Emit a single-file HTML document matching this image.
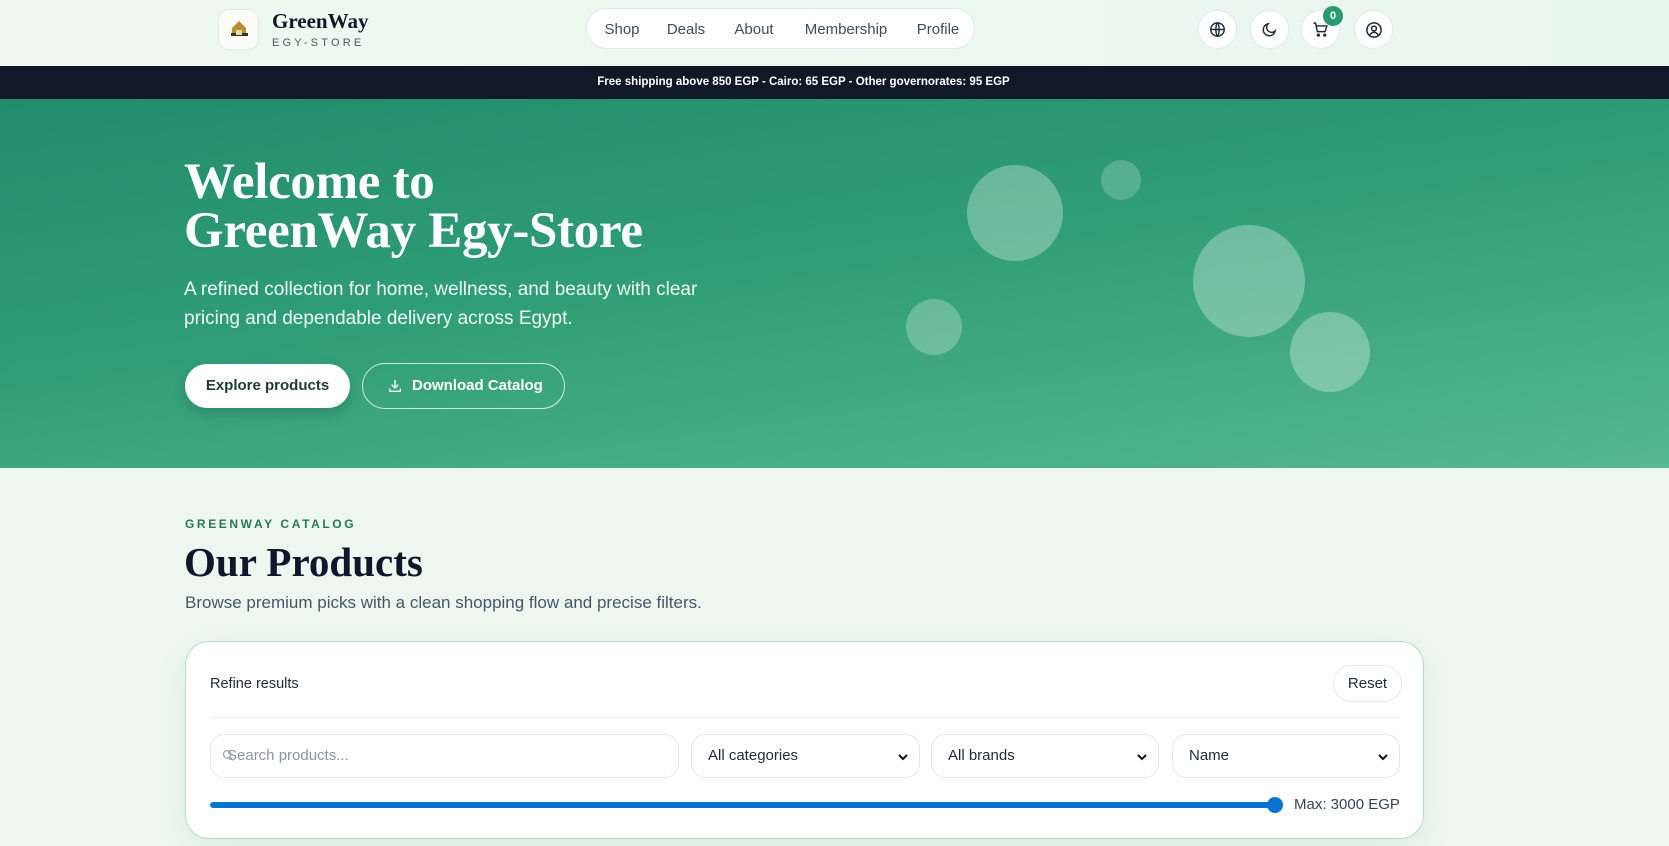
<!DOCTYPE html>
<html><head><meta charset="utf-8"><style>
*{box-sizing:border-box;margin:0;padding:0}
body{width:1669px;height:846px;overflow:hidden;background:#edf7f0;font-family:"Liberation Sans",sans-serif;position:relative}
.abs{position:absolute}
header{position:absolute;left:0;top:0;width:1669px;height:66px;background:linear-gradient(90deg,#eef8f1,#e9f6ee)}
.logo{left:218px;top:9px;width:41px;height:41px;border-radius:11px;background:#fbfbf7;border:1px solid #e3ebe6}
.brand{left:272px;top:9px;font-family:"Liberation Serif",serif;font-weight:bold;font-size:21px;color:#111827}
.sub{left:272px;top:37px;font-size:11px;letter-spacing:3.2px;color:#4b5563}
.nav{left:586px;top:8px;width:389px;height:41px;border-radius:21px;background:#fff;border:1px solid #e2e8f0}
.nav span{position:absolute;top:12px;font-size:15px;color:#3f4b5b;transform:translateX(-50%)}
.ic{width:39px;height:39px;border-radius:50%;background:#fff;border:1px solid #e2e8f0;top:10px;display:flex;align-items:center;justify-content:center}
.bar{left:0;top:66px;width:1669px;height:33px;background:#111827;color:#fff;font-size:11.5px;font-weight:bold;text-align:center;line-height:33px;padding-right:62px}
.hero{left:0;top:99px;width:1669px;height:369px;background:linear-gradient(172deg,#228c6a 0%,#2f9d77 45%,#55b892 100%)}
.c{position:absolute;border-radius:50%;background:rgba(255,255,255,0.3)}
h1{position:absolute;left:184px;top:158px;font-family:"Liberation Serif",serif;font-size:51px;line-height:49px;color:#fff;font-weight:bold;letter-spacing:-0.3px}
.hp{left:184px;top:275px;font-size:19px;line-height:29px;color:#eef8f3;width:540px}
.btn1{left:185px;top:364px;width:165px;height:44px;border-radius:22px;background:#fff;color:#1f3b33;font-weight:bold;font-size:15px;text-align:center;line-height:44px;box-shadow:0 6px 14px rgba(0,0,0,.15)}
.btn2{left:362px;top:363px;width:203px;height:46px;border-radius:23px;border:1.5px solid rgba(255,255,255,.75);color:#fff;font-weight:bold;font-size:15px;line-height:43px;padding-left:49px}
.lab{left:185px;top:517px;font-size:12px;font-weight:bold;letter-spacing:2.6px;color:#27785a}
h2{position:absolute;left:184px;top:538px;font-family:"Liberation Serif",serif;font-size:41px;font-weight:bold;color:#0f172a}
.desc{left:185px;top:593px;font-size:17px;color:#475569}
.card{left:185px;top:641px;width:1239px;height:198px;border-radius:24px;background:#fff;border:1px solid #b9d9ca;box-shadow:0 10px 30px rgba(40,120,90,.08)}
.inp{position:absolute;top:92px;height:44px;border:1px solid #e2e8f0;border-radius:14px;font-size:15px;color:#1f2937;line-height:42px;padding-left:16px}
.sel svg{position:absolute;right:10px;top:16px}
</style></head><body>
<header>
<div class="abs logo"><svg width="41" height="41" viewBox="0 0 41 41"><path d="M20 11 L13 18 V26 H27 V18 Z" fill="#b8902f"/><rect x="12" y="23" width="17" height="3" fill="#333"/><rect x="17" y="20" width="6" height="5" fill="#e9d9a8"/></svg></div>
<div class="abs brand">GreenWay</div>
<div class="abs sub">EGY-STORE</div>
<div class="abs nav">
<span style="left:35px">Shop</span><span style="left:99px">Deals</span><span style="left:167px">About</span><span style="left:259px">Membership</span><span style="left:351px">Profile</span>
</div>
<div class="abs ic" style="left:1198px"><svg width="17" height="17" viewBox="0 0 24 24" fill="none" stroke="#1f2937" stroke-width="2"><circle cx="12" cy="12" r="9.5"/><path d="M2.5 12h19M12 2.5c3 3 3 16 0 19M12 2.5c-3 3-3 16 0 19"/></svg></div>
<div class="abs ic" style="left:1250px"><svg width="17" height="17" viewBox="0 0 24 24" fill="none" stroke="#1f2937" stroke-width="2"><path d="M20 14A8.5 8.5 0 1 1 10 4a6.5 6.5 0 0 0 10 10z"/></svg></div>
<div class="abs ic" style="left:1301px"><svg width="17" height="17" viewBox="0 0 24 24" fill="none" stroke="#1f2937" stroke-width="2"><path d="M2 3h3l2.5 12h11L21 7H6.5"/><circle cx="9" cy="20" r="1.3"/><circle cx="18" cy="20" r="1.3"/></svg></div>
<div class="abs" style="left:1323px;top:6px;width:20px;height:20px;border-radius:50%;background:#2a9a72;color:#fff;font-size:11px;font-weight:bold;text-align:center;line-height:20px">0</div>
<div class="abs ic" style="left:1354px"><svg width="18" height="18" viewBox="0 0 24 24" fill="none" stroke="#1f2937" stroke-width="2"><circle cx="12" cy="12" r="9.5"/><circle cx="12" cy="10" r="3.2"/><path d="M6.5 18.5c1.5-2.5 3.300-3.3 5.5-3.3s4 .8 5.5 3.3"/></svg></div>
</header>
<div class="abs bar">Free shipping above 850 EGP - Cairo: 65 EGP - Other governorates: 95 EGP</div>
<div class="abs hero">
<div class="c" style="left:967px;top:66px;width:96px;height:96px"></div>
<div class="c" style="left:1101px;top:61px;width:40px;height:40px;background:rgba(255,255,255,.2)"></div>
<div class="c" style="left:1193px;top:126px;width:112px;height:112px"></div>
<div class="c" style="left:1290px;top:213px;width:80px;height:80px"></div>
<div class="c" style="left:906px;top:200px;width:56px;height:56px;background:rgba(255,255,255,.25)"></div>
</div>
<h1>Welcome to<br>GreenWay Egy-Store</h1>
<div class="abs hp">A refined collection for home, wellness, and beauty with clear pricing and dependable delivery across Egypt.</div>
<div class="abs btn1">Explore products</div>
<div class="abs btn2"><svg class="abs" style="left:24px;top:14px" width="16" height="16" viewBox="0 0 24 24" fill="none" stroke="#fff" stroke-width="2"><path d="M12 3v12M7 10l5 5 5-5M4 16v4h16v-4"/></svg>Download Catalog</div>
<div class="abs lab">GREENWAY CATALOG</div>
<h2>Our Products</h2>
<div class="abs desc">Browse premium picks with a clean shopping flow and precise filters.</div>
<div class="abs card">
<div class="abs" style="left:24px;top:34px;font-size:14.5px;color:#1f2937">Refine results</div>
<div class="abs" style="left:1147px;top:23px;width:69px;height:37px;border-radius:19px;border:1px solid #e2e8f0;font-size:15px;color:#1f2937;text-align:center;line-height:35px">Reset</div>
<div class="abs" style="left:24px;top:75px;width:1190px;height:1px;background:#e5ece8"></div>
<div class="inp" style="left:24px;width:469px;color:#8b95a1"><svg class="abs" style="left:10px;top:13px" width="15" height="15" viewBox="0 0 24 24" fill="none" stroke="#9aa3ad" stroke-width="2"><circle cx="10" cy="10" r="6"/><path d="M15 15l5 5"/></svg>Search products...</div>
<div class="inp sel" style="left:505px;width:229px">All categories<svg width="12" height="12" viewBox="0 0 12 12"><path d="M2 4l4 4 4-4" fill="none" stroke="#111" stroke-width="2"/></svg></div>
<div class="inp sel" style="left:745px;width:228px">All brands<svg width="12" height="12" viewBox="0 0 12 12"><path d="M2 4l4 4 4-4" fill="none" stroke="#111" stroke-width="2"/></svg></div>
<div class="inp sel" style="left:986px;width:228px">Name<svg width="12" height="12" viewBox="0 0 12 12"><path d="M2 4l4 4 4-4" fill="none" stroke="#111" stroke-width="2"/></svg></div>
<div class="abs" style="left:24px;top:160px;width:1066px;height:6px;border-radius:3px;background:#0a73d0"></div>
<div class="abs" style="left:1081px;top:155px;width:16px;height:16px;border-radius:50%;background:#0a73d0"></div>
<div class="abs" style="left:1108px;top:154px;font-size:15px;color:#334155">Max: 3000 EGP</div>
</div>
</body></html>
